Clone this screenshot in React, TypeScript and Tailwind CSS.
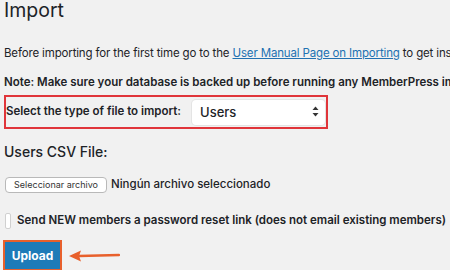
import { useState } from "react";

const App = () => {
    const [fileType, setFileType] = useState('users')

    return (
        <main className="w-[450px] h-[274px] overflow-hidden bg-[#f1f1f1] text-[#1d2327] font-['Inter','Liberation_Sans',sans-serif] relative">
            <div className="flex flex-col px-[4px]">
                <h1 className="text-[19.5px] leading-[20px] font-normal text-[#1d2327]">Import</h1>

                <p className="text-[11.5px] leading-[16px] mt-[25px] tracking-[-0.15px] whitespace-nowrap">
                    Before importing for the first time go to the{' '}
                    <a href="#" className="text-[#2271b1] underline">User Manual Page on Importing</a>
                    {' '}to get instructions
                </p>

                <p className="text-[11.5px] leading-[16px] mt-[13px] font-semibold whitespace-nowrap">
                    Note: Make sure your database is backed up before running any MemberPress imp
                </p>

                <div className="mt-[5px] w-[324px] h-[34px] border-2 border-[#e0353a] flex items-center">
                    <span className="text-[11.5px] font-semibold whitespace-nowrap">Select the type of file to import:</span>
                    <div className="relative ml-[11px]">
                        <select
                            value={fileType}
                            onChange={(e) => setFileType(e.target.value)}
                            className="appearance-none w-[133px] h-[25px] bg-white rounded-[4px] shadow-[0_0_0_1px_#e4e4e4] pl-[8px] text-[13px] font-medium text-[#1d2327] outline-none"
                        >
                            <option value="users">Users</option>
                            <option value="members">Members</option>
                        </select>
                        <svg className="absolute right-[6px] top-[7px] pointer-events-none" width="7" height="11" viewBox="0 0 7 11">
                            <path d="M3.5 0.5 L6.5 4 H0.5 Z" fill="#333" />
                            <path d="M3.5 10.5 L6.5 7 H0.5 Z" fill="#333" />
                        </svg>
                    </div>
                </div>

                <h2 className="text-[14px] leading-[20px] font-medium mt-[13px]">Users CSV File:</h2>

                <div className="flex items-center mt-[15px] h-[16px]">
                    <button className="ml-[1px] h-[16px] w-[102px] bg-white border border-[#b9b9b9] rounded-[4px] text-[9px] leading-[14px] text-[#333] whitespace-nowrap">
                        Seleccionar archivo
                    </button>
                    <span className="ml-[4px] text-[11.5px] font-medium whitespace-nowrap">Ningún archivo seleccionado</span>
                </div>

                <label className="flex items-center mt-[20px] h-[16px]">
                    <span className="ml-[1px] w-[13px] h-[16px] bg-white border border-[#d0d0d0] rounded-[2px]" />
                    <span className="ml-[6px] text-[11.5px] font-semibold whitespace-nowrap">
                        Send NEW members a password reset link (does not email existing members)
                    </span>
                </label>

                <div className="flex items-center mt-[11px]">
                    <button className="-ml-[1px] w-[59px] h-[31px] border-2 border-[#e8602c] bg-[#1e7bb8] text-white text-[12px] font-bold flex items-center justify-center">
                        Upload
                    </button>
                    <svg className="ml-[6px]" width="52" height="14" viewBox="0 0 52 14">
                        <path d="M11 7 L51 6" stroke="#e8602c" strokeWidth="2.5" strokeLinecap="round" />
                        <path d="M1 7 L13 1.5 L11 7 L13 12.5 Z" fill="#e8602c" />
                    </svg>
                </div>
            </div>
            <div className="absolute left-0 right-0 bottom-0 h-[4px] bg-white" />
        </main>
    )
}

export default App;
